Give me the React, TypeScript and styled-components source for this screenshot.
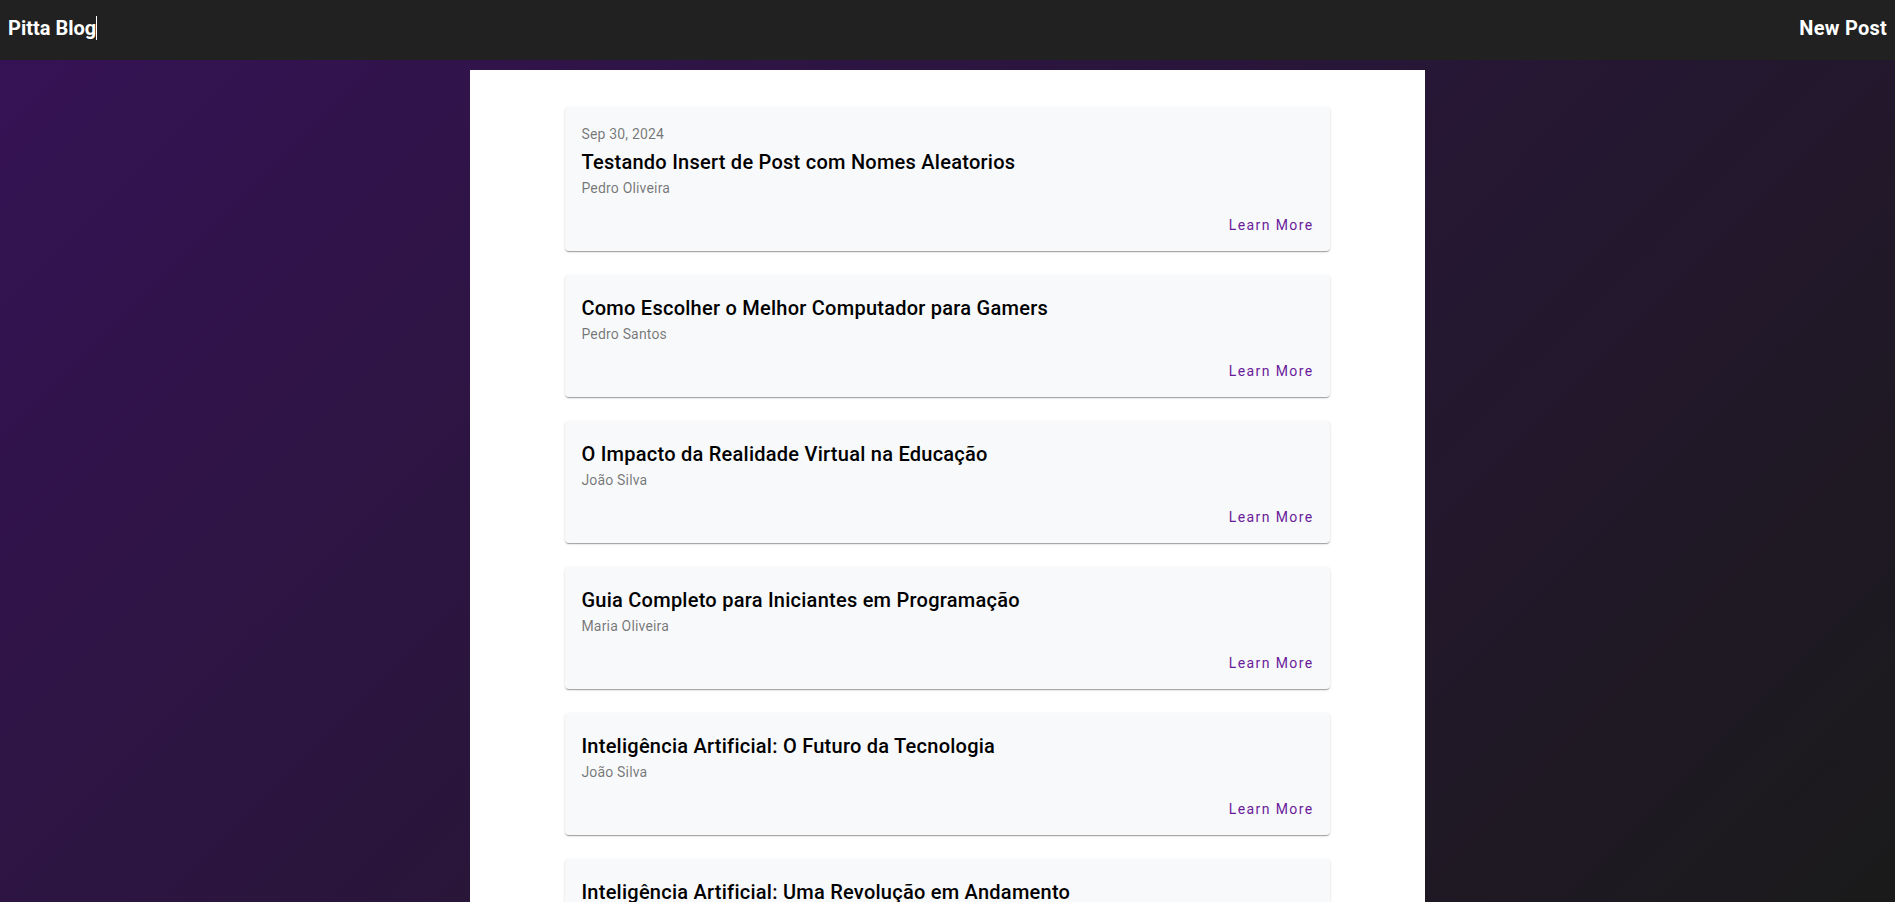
import React from "react";
import styled, { createGlobalStyle } from "styled-components";

const GlobalStyle = createGlobalStyle`
  *, *::before, *::after { box-sizing: border-box; }
  html, body, #root { height: 100%; }
  body {
    margin: 0;
    overflow: hidden;
    font-family: Roboto, "Helvetica Neue", sans-serif;
    color: #000;
  }
`;

const Page = styled.div`
  display: flex;
  flex-direction: column;
  height: 100%;
  background: linear-gradient(135deg, #361256 0%, #1a1a1a 100%);
`;

const Toolbar = styled.header`
  display: flex;
  flex: none;
  align-items: center;
  justify-content: space-between;
  height: 60px;
  padding: 0 8px 4px;
  background: #212121;
`;

const ToolbarLink = styled.a`
  color: #fff;
  font-size: 20px;
  font-weight: 700;
  line-height: 24px;
  letter-spacing: 0.0125em;
  text-decoration: none;
  white-space: nowrap;
`;

const Brand = styled(ToolbarLink)`
  border-right: 1px solid #fff;
  letter-spacing: normal;
`;

const Scroller = styled.div`
  flex: 1;
  min-height: 0;
  padding-top: 10px;
  overflow: hidden;
`;

const Feed = styled.main`
  display: flex;
  flex-direction: column;
  align-items: center;
  gap: 24px;
  width: 50.4%;
  margin: 0 auto;
  padding: 37px 0;
  background: #fff;
`;

const Card = styled.article`
  width: 80%;
  border-radius: 4px;
  background: #f8f9fb;
  box-shadow:
    0 2px 1px -1px rgba(0, 0, 0, 0.2),
    0 1px 1px 0 rgba(0, 0, 0, 0.14),
    0 1px 3px 0 rgba(0, 0, 0, 0.12);
`;

const CardHeader = styled.div`
  padding: 16px 16px 0;
`;

const CardMeta = styled.div`
  color: rgba(0, 0, 0, 0.54);
  font-size: 14px;
  font-weight: 400;
  line-height: 22px;
  letter-spacing: 0.0125em;
`;

const CardTitle = styled.h2`
  margin: 0;
  padding-top: 2px;
  font-size: 20px;
  font-weight: 500;
  line-height: 30px;
  letter-spacing: 0.0125em;
`;

const CardActions = styled.div`
  display: flex;
  align-items: center;
  justify-content: flex-end;
  min-height: 52px;
  padding: 8px;
`;

const LearnMore = styled.button`
  height: 36px;
  padding: 0 8px;
  border: 0;
  border-radius: 4px;
  background: transparent;
  color: #6a1b9a;
  font-family: inherit;
  font-size: 14px;
  font-weight: 400;
  letter-spacing: 0.1em;
  cursor: pointer;
`;

interface Post {
  title: string;
  author: string;
  date?: string;
}

const posts: Post[] = [
  { title: "Testando Insert de Post com Nomes Aleatorios", author: "Pedro Oliveira", date: "Sep 30, 2024" },
  { title: "Como Escolher o Melhor Computador para Gamers", author: "Pedro Santos" },
  { title: "O Impacto da Realidade Virtual na Educação", author: "João Silva" },
  { title: "Guia Completo para Iniciantes em Programação", author: "Maria Oliveira" },
  { title: "Inteligência Artificial: O Futuro da Tecnologia", author: "João Silva" },
  { title: "Inteligência Artificial: Uma Revolução em Andamento", author: "" },
];

function PostCard({ post }: { post: Post }) {
  return (
    <Card>
      <CardHeader>
        {post.date && <CardMeta>{post.date}</CardMeta>}
        <CardTitle>{post.title}</CardTitle>
        <CardMeta>{post.author}</CardMeta>
      </CardHeader>
      <CardActions>
        <LearnMore type="button">Learn More</LearnMore>
      </CardActions>
    </Card>
  );
}

export default function App() {
  return (
    <>
      <GlobalStyle />
      <Page>
        <Toolbar>
          <Brand href="#">Pitta Blog</Brand>
          <ToolbarLink href="#new">New Post</ToolbarLink>
        </Toolbar>
        <Scroller>
          <Feed>
            {posts.map((post) => (
              <PostCard key={post.title} post={post} />
            ))}
          </Feed>
        </Scroller>
      </Page>
    </>
  );
}
